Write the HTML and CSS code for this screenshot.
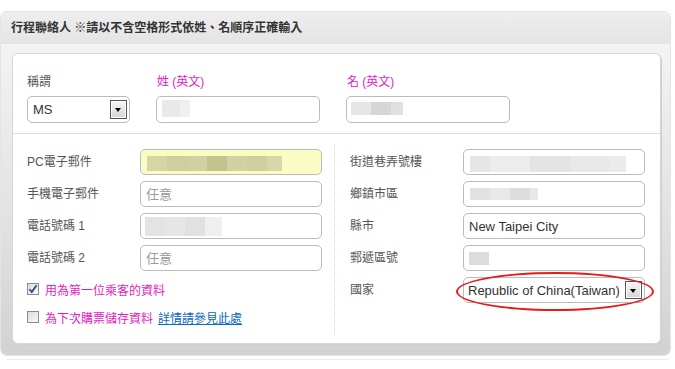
FILE: index.html
```html
<!DOCTYPE html>
<html>
<head>
	<meta charset="utf-8">
	<title>行程聯絡人</title>
	<link rel="stylesheet" href="styles.css">
</head>
<body>

	<div class="panel">
		<div class="panel-head">行程聯絡人 ※請以不含空格形式依姓、名順序正確輸入</div>
		<div class="card">
			<div class="name-row">
				<div class="name-field field-title">
					<div class="name-label">稱謂</div>
					<div class="select"><span>MS</span><i class="arrow"></i></div>
				</div>
				<div class="name-field">
					<div class="name-label required">姓 (英文)</div>
					<input class="text text-name blur-last" type="text">
				</div>
				<div class="name-field">
					<div class="name-label required">名 (英文)</div>
					<input class="text text-name blur-first" type="text">
				</div>
			</div>

			<div class="detail">
				<div class="col col-left">
					<div class="row"><label>PC電子郵件</label><input class="text blur-pc" type="text"></div>
					<div class="row"><label>手機電子郵件</label><input class="text" type="text" placeholder="任意"></div>
					<div class="row"><label>電話號碼 1</label><input class="text blur-tel" type="text"></div>
					<div class="row"><label>電話號碼 2</label><input class="text" type="text" placeholder="任意"></div>
					<div class="check-row checked-row">
						<span class="check">
							<svg width="10" height="10" viewBox="0 0 10 10"><path d="M1.5 5.2 L3.8 8 L8.6 1.2" fill="none" stroke="#2c468f" stroke-width="1.8"/></svg>
						</span>
						用為第一位乘客的資料
					</div>
					<div class="check-row">
						<span class="check"></span>
						為下次購票儲存資料<a href="#">詳情請參見此處</a>
					</div>
				</div>
				<div class="col col-right">
					<div class="row"><label>街道巷弄號樓</label><input class="text blur-street" type="text"></div>
					<div class="row"><label>鄉鎮市區</label><input class="text blur-town" type="text"></div>
					<div class="row"><label>縣市</label><input class="text" type="text" value="New Taipei City"></div>
					<div class="row"><label>郵遞區號</label><input class="text blur-zip" type="text"></div>
					<div class="row country-row">
						<label>國家</label>
						<div class="select select-country"><span>Republic of China(Taiwan)</span><i class="arrow"></i></div>
						<span class="ring"></span>
					</div>
				</div>
			</div>
		</div>
	</div>
	<div class="rule"></div>

</body>
</html>
```

FILE: styles.css
```css
* {
	box-sizing: border-box;
}
body {
	margin: 0;
	background: #fff;
	font-family: "Liberation Sans", "Noto Sans CJK TC", sans-serif;
	font-size: 12px;
	color: #555;
}
.panel {
	margin: 12px 5px 0 1px;
	height: 343px;
	border-radius: 6px;
	background: linear-gradient(#f6f6f6, #e2e2e2 60%, #d2d2d2);
	box-shadow: 0 0 0 1px #e4e4e4;
}
.panel-head {
	height: 32px;
	line-height: 32px;
	padding-left: 10px;
	border-radius: 6px 6px 0 0;
	background: linear-gradient(#eeeeee, #e4e4e4);
	font-weight: bold;
	color: #333;
}
.card {
	margin: 9px 9px 0 11px;
	height: 291px;
	background: #fff;
	border: solid 1px #d6d6d6;
	border-radius: 6px;
	box-shadow: 1px 1px 0 #cfcfcf;
}
.name-row {
	display: flex;
	gap: 26px;
	padding: 20px 0 10px 14px;
	border-bottom: solid 1px #dcdcdc;
}
.name-label {
	height: 16px;
	line-height: 16px;
	margin-bottom: 6px;
}
.required {
	color: #e01cc4;
	padding-left: 1px;
}
.field-title {
	width: 103px;
}
.select {
	display: flex;
	align-items: center;
	justify-content: space-between;
	height: 27px;
	padding: 0 2px 0 5px;
	border: solid 1px #bbb;
	border-radius: 5px;
	background: #fff;
	font-size: 13px;
	color: #333;
}
.arrow {
	position: relative;
	width: 17px;
	height: 19px;
	border: solid 1px #555;
	background: linear-gradient(#f6f6f6, #d6d6d6);
	box-shadow: inset 0 0 0 1px #fff;
}
.arrow::after {
	content: "";
	position: absolute;
	left: 4px;
	top: 7px;
	border-left: 3.5px solid transparent;
	border-right: 3.5px solid transparent;
	border-top: 4px solid #000;
}
.text {
	display: block;
	width: 182px;
	height: 26px;
	padding: 0 5px;
	border: solid 1px #bbb;
	border-radius: 5px;
	background-color: #fff;
	font-family: "Liberation Sans", "Noto Sans CJK TC", sans-serif;
	font-size: 13px;
	color: #333;
	outline: none;
}
.text::placeholder {
	color: #999;
}
.text-name {
	width: 164px;
	height: 27px;
}
.select-country {
	width: 182px;
	height: 26px;
	padding-left: 4px;
}
.select-country .arrow {
	height: 18px;
}

/* blurred values */
.blur-last {
	background: linear-gradient(90deg, #e9e9e9 0 18px, #f0f0f0 18px) no-repeat 5px 3px / 28px 17px, #fff;
}
.blur-first {
	background: linear-gradient(90deg, #e6e6e6 0 20px, #d6d6d6 20px 40px, #e0e0e0 40px) no-repeat 4px 5px / 52px 13px, #fff;
}
.blur-pc {
	background: linear-gradient(90deg, #d4d6a4 0 20px, #cdd09c 20px 40px, #cfd2a0 40px 60px, #c1c48f 60px 80px, #d0d3a1 80px 100px, #cdd09c 100px 120px, #d6d8a8 120px) no-repeat 6px 6px / 135px 15px, #fbfbc4;
}
.blur-tel {
	background: linear-gradient(90deg, #e3e3e3 0 20px, #e6e6e6 20px 40px, #e0e1e3 40px 60px, #eeefef 60px) no-repeat 4px 3px / 77px 19px, #fff;
}
.blur-street {
	background: linear-gradient(90deg, #e6e6e6 0 20px, #ececec 20px 60px, #e4e4e4 60px 100px, #e8e8e8 100px 140px, #ebebeb 140px) no-repeat 6px 6px / 156px 16px, #fff;
}
.blur-town {
	background: linear-gradient(90deg, #e2e2e2 0 20px, #e8e8e8 20px 40px, #dcdcdc 40px 60px, #e8e8e8 60px) no-repeat 6px 6px / 68px 12px, #fff;
}
.blur-zip {
	background: linear-gradient(#dcdcdc, #dcdcdc) no-repeat 5px 6px / 20px 13px, #fff;
}

.detail {
	display: flex;
	padding: 10px 0 8px;
}
.col {
	display: flex;
	flex-direction: column;
	gap: 6px;
	padding-top: 5px;
}
.col-left {
	width: 322px;
	padding-left: 14px;
	padding-right: 12px;
	padding-bottom: 10px;
	border-right: dotted 1px #cfcfcf;
}
.col-right {
	width: 324px;
	padding-left: 15px;
	padding-right: 14px;
}
.row {
	display: flex;
	align-items: center;
}
.row label {
	width: 113px;
	line-height: 16px;
}
.country-row {
	position: relative;
}
.ring {
	position: absolute;
	left: 106px;
	top: -5px;
	width: 198px;
	height: 39px;
	border: solid 2px #e41b1b;
	border-radius: 50%;
	pointer-events: none;
}
.check-row {
	display: flex;
	align-items: center;
	gap: 6px;
	height: 16px;
	margin-top: 6px;
	color: #e01cc4;
}
.checked-row {
	margin-top: 4px;
}
.check-row a {
	margin-left: -1px;
	color: #0e68c0;
}
.check {
	display: flex;
	align-items: center;
	justify-content: center;
	width: 12px;
	height: 12px;
	border: solid 1px #8c8c8c;
	background: linear-gradient(135deg, #dcdcdc, #fafafa);
}
.rule {
	margin: 4px 6px 0 7px;
	border-top: solid 1px #ececec;
}
```
